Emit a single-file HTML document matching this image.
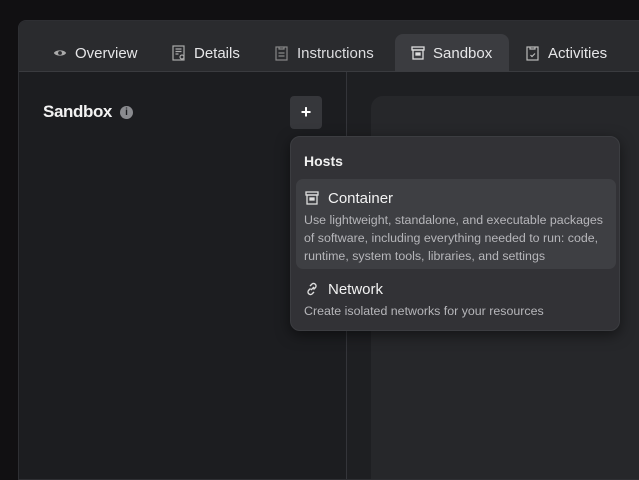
<!DOCTYPE html>
<html><head><style>
*{margin:0;padding:0;box-sizing:border-box}
body{width:639px;height:466px;background:#111012;font-family:"Liberation Sans",sans-serif;overflow:hidden;position:relative}
.panel{position:absolute;left:18px;top:20px;width:640px;height:460px;background:#1c1d20;border-radius:8px 0 0 0;border:1px solid #2e2f33;overflow:hidden}
.tabs{position:absolute;left:0;top:0;width:100%;height:51px;background:#2a2b2e;border-bottom:1px solid #3a3b3f}
.tab{position:absolute;top:21px;font-size:15px;color:#e6e6e8;display:flex;align-items:center;gap:8px;height:22px}
.tab svg{width:14px;height:16px}
.active{position:absolute;left:376px;top:13px;width:114px;height:38px;background:#3b3c40;border-radius:8px 8px 0 0}
.vline{position:absolute;left:327px;top:51px;width:1px;height:420px;background:#34353a}
.right{position:absolute;left:328px;top:51px;width:320px;height:420px;background:#1e1f22}
.card{position:absolute;left:352px;top:75px;width:300px;height:400px;background:#26272a;border-radius:12px}
.title{position:absolute;left:24px;top:81px;font-size:17px;font-weight:bold;color:#f2f2f2;letter-spacing:-0.4px}
.info{position:absolute;left:101px;top:85px;width:13px;height:13px;border-radius:50%;background:#8a8b8f;color:#1c1d20;font-size:10px;font-weight:bold;text-align:center;line-height:13px}
.plus{position:absolute;left:271px;top:75px;width:32px;height:33px;background:#36373b;border-radius:4px;color:#fff;font-size:18px;font-weight:bold;text-align:center;line-height:32px}
.dd{position:absolute;left:290px;top:136px;width:330px;height:195px;background:#323236;border-radius:10px;box-shadow:0 4px 14px rgba(0,0,0,.5);border:1px solid #3c3d41}
.dd h4{position:absolute;left:13px;top:16px;font-size:14px;color:#f0f0f0}
.item{position:absolute;left:5px;width:320px;border-radius:7px;padding:9px 8px 0 8px}
.item .t{font-size:15px;color:#f2f2f2;display:flex;align-items:center;gap:8px;height:20px}
.item .d{font-size:12.4px;color:#b6b6ba;line-height:18px;margin-top:3px}
</style></head><body>
<div class="panel">
 <div class="tabs">
  <div class="active"></div>
  <div class="tab" style="left:34px"><svg viewBox="0 0 16 16"><path d="M1 8c2-4 12-4 14 0c-2 4-12 4-14 0z" fill="#aaa"/><circle cx="8" cy="8" r="2.2" fill="#2a2b2e"/></svg>Overview</div>
  <div class="tab" style="left:153px"><svg viewBox="0 0 14 16" fill="none" stroke="#aaa" stroke-width="1.2"><rect x="1" y="1" width="11" height="14"/><path d="M3.5 4h6M3.5 6.5h6M3.5 9h3"/><circle cx="10" cy="12" r="2"/></svg>Details</div>
  <div class="tab" style="left:256px;color:#dcdcdf"><svg viewBox="0 0 14 16" fill="none" stroke="#888" stroke-width="1.2"><rect x="1" y="2" width="11" height="13"/><path d="M4 2v2h5V2M3.5 8h6M3.5 11h6"/></svg>Instructions</div>
  <div class="tab" style="left:392px"><svg viewBox="0 0 14 16" fill="none" stroke="#ddd" stroke-width="1.3"><rect x="1" y="2" width="12" height="3"/><rect x="2" y="5" width="10" height="9"/><rect x="5" y="8" width="4" height="2" fill="#ddd"/></svg>Sandbox</div>
  <div class="tab" style="left:507px"><svg viewBox="0 0 14 16" fill="none" stroke="#bbb" stroke-width="1.2"><rect x="1" y="2" width="11" height="13"/><path d="M4 2v2h5V2M4.5 10l1.5 1.5 3-3"/></svg>Activities</div>
 </div>
 <div class="right"></div>
 <div class="card"></div>
 <div class="vline"></div>
 <div class="title">Sandbox</div>
 <div class="info">i</div>
 <div class="plus">+</div>
</div>
<div class="dd">
 <h4>Hosts</h4>
 <div class="item" style="top:42px;height:90px;background:#3e3f43">
  <div class="t"><svg width="16" height="16" viewBox="0 0 14 16" fill="none" stroke="#ddd" stroke-width="1.3"><rect x="1" y="2" width="12" height="3"/><rect x="2" y="5" width="10" height="9"/><rect x="5" y="8" width="4" height="2" fill="#ddd"/></svg>Container</div>
  <div class="d">Use lightweight, standalone, and executable packages of software, including everything needed to run: code, runtime, system tools, libraries, and settings</div>
 </div>
 <div class="item" style="top:133px;height:55px">
  <div class="t"><svg width="16" height="16" viewBox="0 0 16 16" fill="none" stroke="#ddd" stroke-width="1.4"><path d="M7 9l3-3M6 5l2-2a2.5 2.5 0 013.5 3.5l-2 2M10 11l-2 2a2.5 2.5 0 01-3.5-3.5l2-2"/></svg>Network</div>
  <div class="d">Create isolated networks for your resources</div>
 </div>
</div>
</body></html>
